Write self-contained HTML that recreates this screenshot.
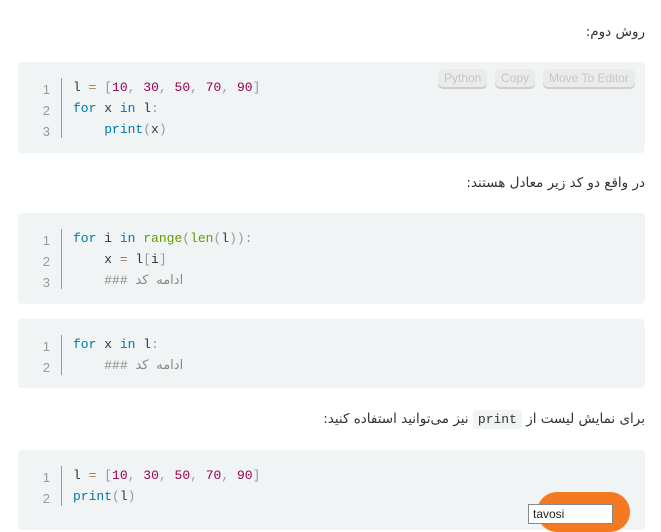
<!DOCTYPE html>
<html><head><meta charset="utf-8"><style>
body{margin:0;width:661px;height:521px;overflow:hidden;background:#fff;font-family:"Liberation Sans","DejaVu Sans",sans-serif;position:relative}
.p{position:absolute;right:16px;color:#333;direction:rtl;font-family:"DejaVu Sans",sans-serif;font-size:13.5px}
.blk{position:absolute;left:18px;width:627px;background:#f1f4f5;border-radius:4px}
.ln{position:absolute;left:0;width:32px;text-align:right;color:#999;font-family:"Liberation Sans",sans-serif;font-size:13px;line-height:21px}
.sep{position:absolute;left:43px;width:1px;background:#999}
.code{position:absolute;left:55px;font-family:"Liberation Mono","DejaVu Sans",monospace;font-size:13px;line-height:21px;color:#333;white-space:pre}
.k{color:#0077aa}.n{color:#990055}.o{color:#a67f59}.g{color:#999}.f{color:#669900}.c{color:#888}.c b{font-weight:normal;letter-spacing:3px}
.btn{position:absolute;top:7px;height:18px;font-size:12px;line-height:18px;color:#c5c5c5;background:#ebebeb;border-radius:5px;box-shadow:0 2px 0 #cfcfcf;padding:0 6px}
.ic{background:#f1f4f5;font-family:"Liberation Mono",monospace;padding:2px 5px;border-radius:3px;font-size:13px}
</style></head><body>
<div class="p" style="top:24px">روش دوم:</div>
<div class="blk" style="top:62px;height:91px">
<div class="ln" style="top:17px">1<br>2<br>3</div><div class="sep" style="top:16px;height:60px"></div>
<div class="code" style="top:15px">l <span class="o">=</span> <span class="g">[</span><span class="n">10</span><span class="g">,</span> <span class="n">30</span><span class="g">,</span> <span class="n">50</span><span class="g">,</span> <span class="n">70</span><span class="g">,</span> <span class="n">90</span><span class="g">]</span>
<span class="k">for</span> x <span class="k">in</span> l<span class="g">:</span>
    <span class="k">print</span><span class="g">(</span>x<span class="g">)</span></div>
<div class="btn" style="left:420px">Python</div><div class="btn" style="left:477px">Copy</div><div class="btn" style="left:525px">Move To Editor</div>
</div>
<div class="p" style="top:175px">در واقع دو کد زیر معادل هستند:</div>
<div class="blk" style="top:213px;height:91px">
<div class="ln" style="top:17px">1<br>2<br>3</div><div class="sep" style="top:16px;height:60px"></div>
<div class="code" style="top:15px"><span class="k">for</span> i <span class="k">in</span> <span class="f">range</span><span class="g">(</span><span class="f">len</span><span class="g">(</span>l<span class="g">)):</span>
    x <span class="o">=</span> l<span class="g">[</span>i<span class="g">]</span>
    <span class="c" dir="ltr">### <b>ادامه کد</b></span></div>
</div>
<div class="blk" style="top:319px;height:69px">
<div class="ln" style="top:17px">1<br>2</div><div class="sep" style="top:16px;height:40px"></div>
<div class="code" style="top:15px"><span class="k">for</span> x <span class="k">in</span> l<span class="g">:</span>
    <span class="c" dir="ltr">### <b>ادامه کد</b></span></div>
</div>
<div class="p" style="top:411px">برای نمایش لیست از <span class="ic" dir="ltr">print</span> نیز می‌توانید استفاده کنید:</div>
<div class="blk" style="top:450px;height:80px">
<div class="ln" style="top:17px">1<br>2</div><div class="sep" style="top:16px;height:40px"></div>
<div class="code" style="top:15px">l <span class="o">=</span> <span class="g">[</span><span class="n">10</span><span class="g">,</span> <span class="n">30</span><span class="g">,</span> <span class="n">50</span><span class="g">,</span> <span class="n">70</span><span class="g">,</span> <span class="n">90</span><span class="g">]</span>
<span class="k">print</span><span class="g">(</span>l<span class="g">)</span></div>
</div>
<div style="position:absolute;left:537px;top:492px;width:93px;height:40px;border-radius:20px;background:#f47920"></div>
<div style="position:absolute;left:528px;top:504px;width:85px;height:20px;background:#fff;border:1px solid #888;font-size:12px;line-height:18px;padding-left:4px;box-sizing:border-box;color:#222">tavosi</div>
</body></html>
